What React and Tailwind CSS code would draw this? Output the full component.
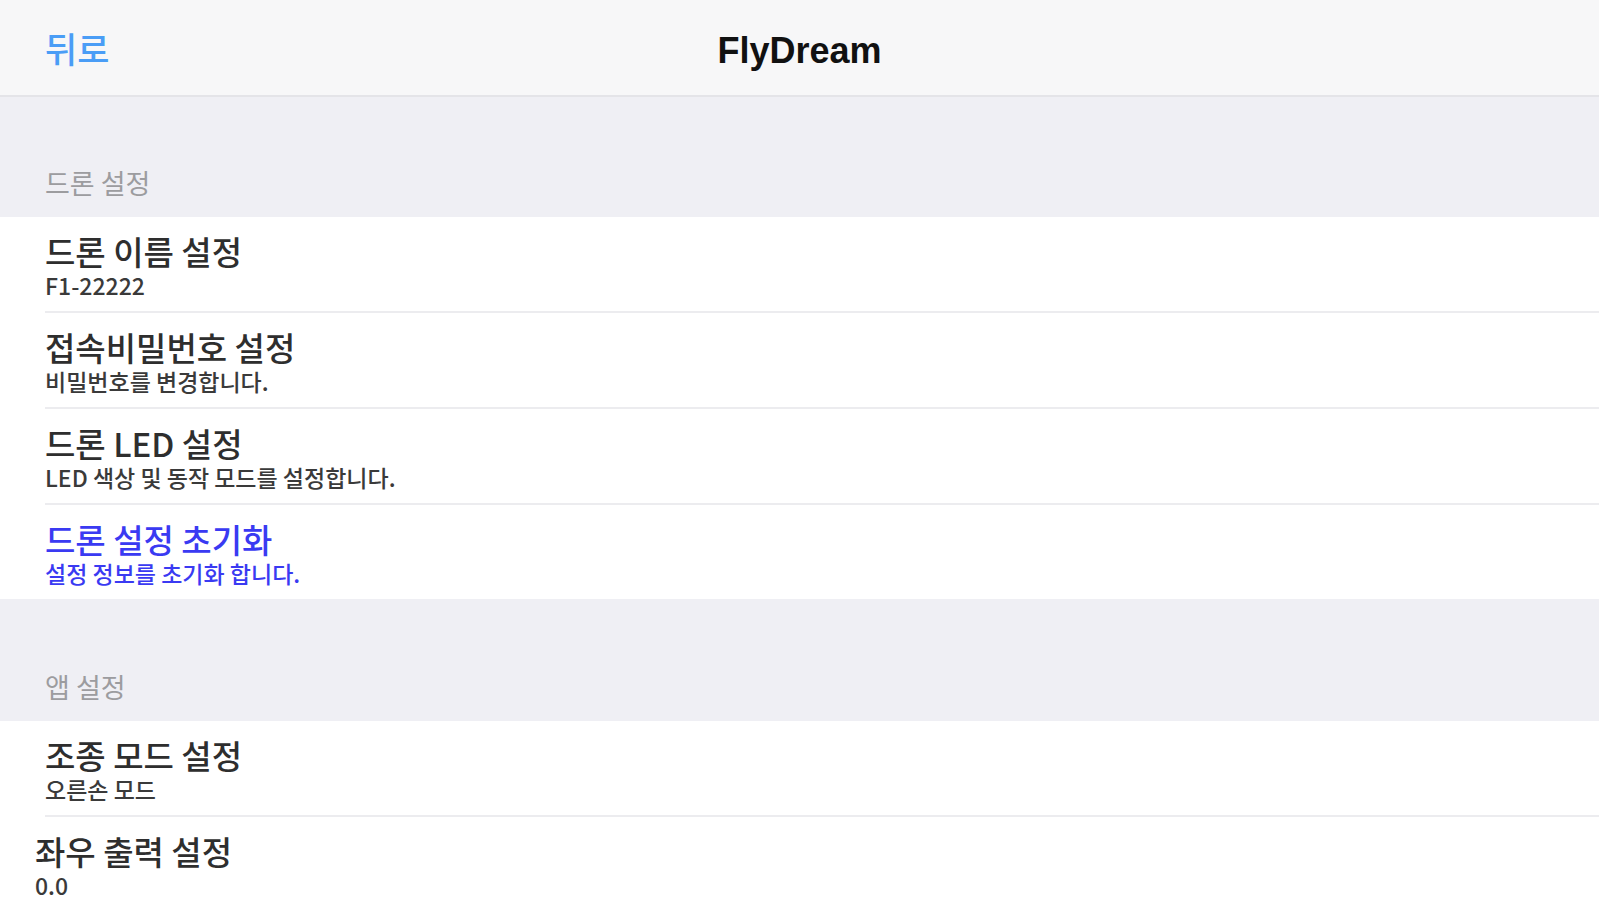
import React from 'react';

const font = { fontFamily: '"Noto Sans CJK KR", "Noto Sans", sans-serif' };

const SettingRow = ({ title, subtitle, accent, last, indent = 'pl-[45px]' }) => (
  <div className={`${indent} bg-white`}>
    <div className="h-[94px] pt-[14px] flex flex-col">
      <div className={`text-[33px] leading-[40px] font-medium ${accent ? 'text-[#3a3af2]' : 'text-[#2e2e2e]'}`}>
        {title}
      </div>
      <div className={`text-[23px] leading-[28px] font-medium ${accent ? 'text-[#3a3af2]' : 'text-[#3a3a3a]'}`}>
        {subtitle}
      </div>
    </div>
    {!last && <div className="h-[2px] bg-[#ececef]" />}
  </div>
);

const SectionHeader = ({ label, className = '' }) => (
  <div className={`h-[122px] bg-[#efeff4] flex items-end pl-[45px] pb-[18px] ${className}`}>
    <span className="text-[27px] leading-[32px] text-[#9c9c9f]">{label}</span>
  </div>
);

export default function App() {
  return (
    <div className="w-[1599px] h-[900px] overflow-hidden bg-[#efeff4]" style={font}>
      {/* Nav bar */}
      <div className="h-[97px] bg-[#f7f7f8] border-b-2 border-[#e4e4e8] flex items-center relative">
        <span className="pl-[45px] pt-[2px] text-[35px] font-medium text-[#4a9df6]">뒤로</span>
        <span
          className="absolute left-0 right-0 top-[29px] text-center text-[36px] leading-[44px] font-bold text-[#111]"
          style={{ fontFamily: '"Liberation Sans", Arial, sans-serif' }}
        >
          FlyDream
        </span>
      </div>

      {/* 드론 설정 */}
      <SectionHeader label="드론 설정" className="-mt-[2px]" />
      <div className="bg-white">
        <SettingRow title="드론 이름 설정" subtitle="F1-22222" />
        <SettingRow title="접속비밀번호 설정" subtitle="비밀번호를 변경합니다." />
        <SettingRow title="드론 LED 설정" subtitle="LED 색상 및 동작 모드를 설정합니다." />
        <SettingRow title="드론 설정 초기화" subtitle="설정 정보를 초기화 합니다." accent last />
      </div>

      {/* 앱 설정 */}
      <SectionHeader label="앱 설정" />
      <div className="bg-white">
        <SettingRow title="조종 모드 설정" subtitle="오른손 모드" />
        <SettingRow title="좌우 출력 설정" subtitle="0.0" indent="pl-[35px]" last />
      </div>
    </div>
  );
}
